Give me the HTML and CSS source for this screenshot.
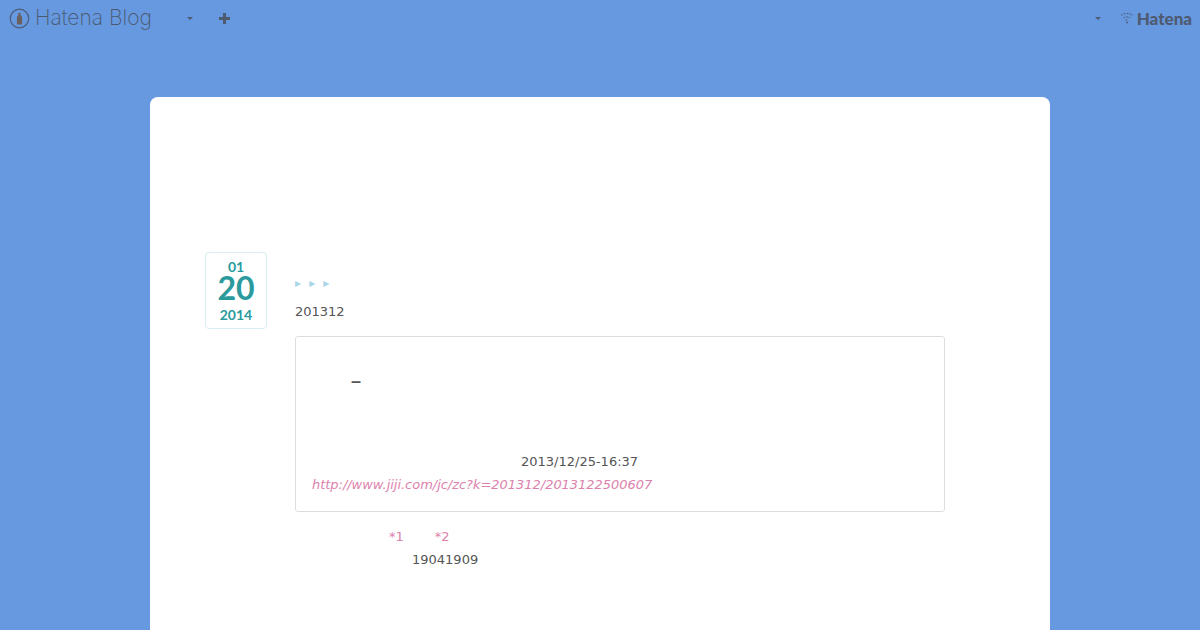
FILE: index.html
```html
<!DOCTYPE html>
<html lang="en">
<head>
    <meta charset="UTF-8">
    <meta name="viewport" content="width=device-width, initial-scale=1.0">
    <title>Hatena Blog</title>
    <link rel="stylesheet" href="styles.css">
</head>
<body>
    <div class="navbar">
        <div class="nav-left">
            <svg class="logo-icon" width="21" height="21" viewBox="0 0 22 22">
                <circle cx="11" cy="11" r="9.7" fill="none" stroke="#4e5f7d" stroke-width="1.3"/>
                <path d="M9.8 5h2.4v2.6c1 .8 1.5 1.6 1.5 2.8V16.500a.8.8 0 0 1-.8.8H9.100a.8.8 0 0 1-.8-.8V10.400c0-1.200.5-2 1.500-2.800z" fill="#6b5f60"/>
            </svg>
            <span class="logo-text">Hatena Blog</span>
            <span class="caret caret-left"></span>
            <svg class="plus" width="11" height="11" viewBox="0 0 11 11"><path d="M4 0h3v4h4v3H7v4H4V7H0V4h4z" fill="#4e5a70"/></svg>
        </div>
        <div class="nav-right">
            <span class="caret"></span>
            <svg class="hatena-icon" width="14" height="12" viewBox="0 0 14 12">
                <path d="M1 3.500C4.500 .8 9.500 .8 13 3.500M3.500 6C5.500 4.600 8.500 4.600 10.500 6M5.500 8.300c1-.6 2-.6 3 0" fill="none" stroke="#4e5f7d" stroke-width="1" stroke-dasharray="2 1"/>
                <circle cx="7" cy="10.500" r="1" fill="#4e5f7d"/>
            </svg>
            <span class="hatena-text">Hatena</span>
        </div>
    </div>

    <div class="container">
        <div class="entry">
            <div class="date">
                <span class="date-month">01</span>
                <span class="date-day">20</span>
                <span class="date-year">2014</span>
            </div>
            <div class="entry-content">
                <p class="crumbs">▸ ▸ ▸</p>
                <p class="line">201312</p>
                <blockquote class="quote">
                    <p class="dash">–</p>
                    <p class="stamp">2013/12/25-16:37</p>
                    <p class="source"><a href="#">http://www.jiji.com/jc/zc?k=201312/2013122500607</a></p>
                </blockquote>
                <p class="notes"><a href="#">*1</a><a href="#">*2</a></p>
                <p class="line years">19041909</p>
            </div>
        </div>
    </div>
</body>
</html>
```

FILE: styles.css
```css
html, body {
    height: 100%;
}

body {
    font-family: "DejaVu Sans", sans-serif;
    font-size: 13px;
    color: #555;
    margin: 0;
    background-color: #6699e0;
    overflow: hidden;
}

p {
    margin: 0;
}

a {
    color: #dc82ad;
    text-decoration: none;
}

.navbar {
    height: 36px;
    display: flex;
    justify-content: space-between;
    align-items: center;
    margin-bottom: 61px;
}

.nav-left, .nav-right {
    display: flex;
    align-items: center;
}

.nav-left {
    padding-left: 9px;
}

.nav-right {
    padding-right: 8px;
}

.logo-text {
    font-family: Inter, sans-serif;
    font-weight: 200;
    font-size: 21px;
    line-height: 22px;
    color: #4b5870;
    margin: -1px 0 0 5px;
}

.caret {
    width: 0;
    height: 0;
    border-left: 3px solid transparent;
    border-right: 3px solid transparent;
    border-top: 3px solid #4e5a70;
}

.caret-left {
    margin-left: 35px;
}

.plus {
    margin-left: 26px;
}

.hatena-icon {
    margin-left: 19px;
}

.hatena-text {
    font-family: Lato, sans-serif;
    font-weight: 900;
    font-size: 17px;
    line-height: 20px;
    color: #4e5a70;
    margin: 1px 0 0 3px;
}

.container {
    width: 900px;
    height: 533px;
    margin: 0 auto;
    background-color: #fff;
    border-radius: 8px 8px 0 0;
    padding: 155px 55px 0;
    box-sizing: border-box;
}

.entry {
    display: flex;
}

.date {
    width: 62px;
    height: 77px;
    box-sizing: border-box;
    border: 1px solid #d8eef0;
    border-radius: 4px;
    display: flex;
    flex-direction: column;
    align-items: center;
    color: #2a9a9c;
    font-family: Lato, sans-serif;
    font-weight: 700;
    padding-top: 7px;
    line-height: 1;
}

.date-month {
    font-size: 14px;
}

.date-day {
    font-size: 32px;
    margin-top: -2px;
}

.date-year {
    font-size: 14px;
    margin-top: 4px;
}

.entry-content {
    width: 650px;
    margin-left: 28px;
}

.crumbs {
    color: #a9d6e8;
    font-size: 12px;
    line-height: 16px;
    padding-top: 23px;
    word-spacing: 4.3px;
}

.line {
    line-height: 23px;
}

.crumbs + .line {
    margin-top: 9px;
}

.quote {
    margin: 13px 0 0;
    height: 176px;
    box-sizing: border-box;
    border: 1px solid #ddd;
    border-radius: 3px;
    padding: 0 16px;
}

.dash {
    font-family: "Liberation Sans", sans-serif;
    font-size: 18px;
    font-weight: bold;
    line-height: 24px;
    padding: 32px 0 0 39px;
}

.stamp {
    padding-left: 209px;
    line-height: 23px;
    margin-top: 57px;
}

.source {
    font-style: italic;
    line-height: 23px;
    letter-spacing: -0.03px;
}

.notes {
    display: flex;
    gap: 31px;
    padding-left: 94px;
    margin-top: 13px;
    line-height: 23px;
}

.years {
    padding-left: 117px;
}
```
